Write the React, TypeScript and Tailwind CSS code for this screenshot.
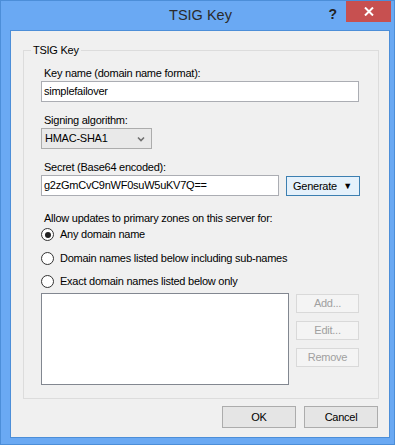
// Windows 8 style "TSIG Key" dialog from the DNS manager.
const font = "font-['Liberation_Sans',Arial,sans-serif]";
const ui = 'text-[11px] tracking-[-0.25px]';

export default function App() {
  return (
    <div className={`w-[395px] h-[445px] bg-[#6aa9f3] border border-[#4c8ed8] flex flex-col ${font}`}>
      <TitleBar />
      <div className="flex-1 ml-[9px] mr-[4px] mb-[6px] border border-[#4c8ed8] bg-[#f0f0f0] flex flex-col">
        <fieldset className="mt-[12px] ml-[12px] mr-[10px] border border-[#dcdcdc] pl-[17px] pr-[18px] pb-[13px]">
          <legend className={`-ml-[10px] px-[2px] ${ui} leading-[15px] text-black`}>TSIG Key</legend>
          <Label className="mt-[8px]">Key name (domain name format):</Label>
          <TextBox value="simplefailover" className="w-[318px]" />
          <Label className="mt-[11px]">Signing algorithm:</Label>
          <div className={`w-[111px] h-[21px] border border-[#acacac] bg-[#e9e9e9] flex items-center justify-between pl-[3px] pr-[6px] ${ui} text-black`}>
            <span>HMAC-SHA1</span>
            <svg width="8" height="6" viewBox="0 0 8 6">
              <polyline points="1,1.5 4,4.5 7,1.5" fill="none" stroke="#707070" strokeWidth="1.6" />
            </svg>
          </div>
          <Label className="mt-[11px]">Secret (Base64 encoded):</Label>
          <div className="flex items-start gap-[7px]">
            <TextBox value="g2zGmCvC9nWF0suW5uKV7Q==" className="w-[238px] h-[20px]" />
            <button className={`mt-[1px] w-[74px] h-[20px] border border-[#3c7fb1] bg-[#e5f1fb] flex items-center pl-[6px] pr-[7px] justify-between ${ui} text-black`}>
              <span>Generate</span>
              <span className="text-[9px] leading-none">▼</span>
            </button>
          </div>
          <div className={`mt-[15px] pl-[3px] ${ui} leading-[15px] text-black`}>
            Allow updates to primary zones on this server for:
          </div>
          <div className="mt-[1px] flex flex-col">
            <Radio checked label="Any domain name" />
            <Radio label="Domain names listed below including sub-names" className="mt-[9px]" />
            <Radio label="Exact domain names listed below only" className="mt-[8px]" />
          </div>
          <div className="mt-[4px] flex items-start gap-[7px]">
            <div className="w-[248px] h-[92px] border border-[#828790] bg-white" />
            <div className="mt-[1px] flex flex-col gap-[8px]">
              <DisabledButton>Add...</DisabledButton>
              <DisabledButton>Edit...</DisabledButton>
              <DisabledButton>Remove</DisabledButton>
            </div>
          </div>
        </fieldset>
        <div className="mt-[7px] mr-[11px] flex justify-end gap-[8px]">
          <DialogButton>OK</DialogButton>
          <DialogButton>Cancel</DialogButton>
        </div>
      </div>
    </div>
  );
}

function TitleBar() {
  return (
    <div className="h-[29px] flex items-start">
      <div className="w-[78px]" />
      <div className="flex-1 pt-[4px] text-center text-[14.5px] leading-[20px] text-[#2b2b2b]">TSIG Key</div>
      <div className="w-[72px] flex items-start justify-end pr-[3px]">
        <span className="mt-[5px] mr-[9px] text-[14px] font-bold leading-[16px] text-[#222]">?</span>
        <div className="w-[45px] h-[21px] bg-[#c75050] flex items-center justify-center">
          <svg width="10" height="9" viewBox="0 0 10 9">
            <path d="M1 0.5 L9 8.5 M9 0.5 L1 8.5" stroke="#ffffff" strokeWidth="2" />
          </svg>
        </div>
      </div>
    </div>
  );
}

function Label({ children, className = '' }: { children: React.ReactNode; className?: string }) {
  return <div className={`pl-[3px] ${ui} leading-[15px] text-black ${className}`}>{children}</div>;
}

function TextBox({ value, className = '' }: { value: string; className?: string }) {
  return (
    <div className={`h-[21px] border border-[#abadb3] bg-white flex items-center pl-[2px] ${ui} text-black ${className}`}>
      {value}
    </div>
  );
}

function Radio({ label, checked, className = '' }: { label: string; checked?: boolean; className?: string }) {
  return (
    <div className={`flex items-center gap-[6px] h-[15px] ${className}`}>
      <div className="w-[13px] h-[13px] rounded-full border border-[#333] bg-white flex items-center justify-center">
        {checked && <div className="w-[6px] h-[6px] rounded-full bg-[#222]" />}
      </div>
      <span className={`${ui} leading-[15px] text-black`}>{label}</span>
    </div>
  );
}

function DisabledButton({ children }: { children: React.ReactNode }) {
  return (
    <div className={`w-[63px] h-[19px] border border-[#d9d9d9] bg-[#f4f4f4] flex items-center justify-center ${ui} text-[#a0a0a0]`}>
      {children}
    </div>
  );
}

function DialogButton({ children }: { children: React.ReactNode }) {
  return (
    <button className={`w-[74px] h-[22px] border border-[#acacac] bg-[#e5e5e5] flex items-center justify-center ${ui} text-black`}>
      {children}
    </button>
  );
}
